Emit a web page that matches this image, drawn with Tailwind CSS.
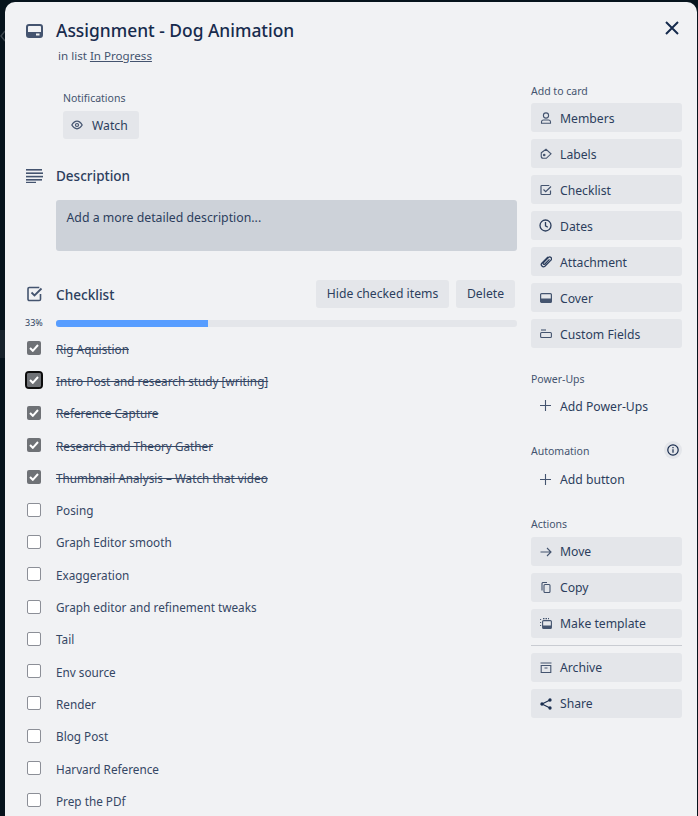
<!DOCTYPE html>
<html><head><meta charset="utf-8"><script src="https://cdn.jsdelivr.net/npm/@tailwindcss/browser@4"></script></head>
<body class="bg-[#06131c] overflow-hidden">
<div class="relative w-[698px] h-[816px] overflow-hidden pt-[2px] pl-[5px] font-['Noto_Sans',sans-serif] text-[#2c3e5d]">
<div class="absolute left-0 top-[330px] w-[5px] h-[28px] bg-[#17222b]"></div>
<svg class="absolute left-0 top-[30px]" width="5" height="12" viewBox="0 0 5 12" fill="none" stroke="#3a444c" stroke-width="1.500"><path d="M5 1 1 6l4 5"/></svg>
<div class="relative w-[692px] h-[900px] bg-[#f1f2f4] rounded-t-[10px] flex">
  <button class="absolute right-[16px] top-[17px] text-[#172b4d]"><svg width="18" height="18" viewBox="0 0 18 18" fill="none" stroke="currentColor" stroke-width="2"><path d="M3 3l12 12M15 3L3 15"/></svg></button>
  <main class="w-[526px] shrink-0">
    <div class="flex pl-[21px] pt-[17px]">
      <svg class="mt-[5px] w-[17px] h-[14px]" viewBox="0 0 17 14"><rect x="1" y="1" width="15" height="12" rx="2" fill="none" stroke="#44546f" stroke-width="2"/><rect x="1" y="8" width="15" height="5" fill="#44546f"/><rect x="10" y="9.5" width="3.5" height="2" fill="#f1f2f4"/></svg>
      <div class="ml-[13px]"><h1 class="text-[17.4px] leading-[24px] font-medium text-[#172b4d] -mt-[1px]">Assignment - Dog Animation</h1>
      <p class="text-[11.6px] leading-[16px] mt-[6px] ml-[2px] text-[#44546f]">in list <span class="underline">In Progress</span></p></div>
    </div>
    <div class="ml-[58px] mt-[27px]">
      <p class="text-[10.5px] leading-[14px] text-[#44546f]">Notifications</p>
      <button class="mt-[6px] h-[28px] w-[76px] bg-[#e4e6ea] rounded-[3px] flex items-center pl-[8px] gap-[9px] text-[12.2px]">
        <svg width="12" height="10" viewBox="0 0 12 10" fill="none" stroke="#44546f" stroke-width="1.2"><path d="M.8 5C2.3 2.5 4 1.2 6 1.2S9.700 2.500 11.200 5C9.700 7.500 8 8.800 6 8.800S2.300 7.500.8 5Z"/><circle cx="6" cy="5" r="1.500"/></svg><span class="pt-[2px]">Watch</span></button>
    </div>
    <div class="flex items-center pl-[21px] mt-[27px] h-[20px]">
      <svg width="17" height="14" viewBox="0 0 17 14" fill="#44546f"><rect x="0" y="0" width="16" height="1.600"/><rect x="0" y="3.400" width="17" height="1.600"/><rect x="0" y="6.800" width="17" height="1.600"/><rect x="0" y="10" width="16" height="1.600"/><rect x="0" y="12.800" width="10" height="1.200"/></svg>
      <h2 class="ml-[13px] text-[13.5px] font-medium">Description</h2>
    </div>
    <div class="ml-[51px] mt-[14px] w-[461px] h-[51px] bg-[#cdd2d9] rounded-[3px] px-[10.500px] pt-[8px] text-[12.3px] leading-[20px]">Add a more detailed description...</div>
    <div class="flex items-center pl-[22px] mt-[29px] h-[28px]">
      <svg width="16" height="16" viewBox="0 0 16 16" fill="none" stroke="#44546f" stroke-width="1.600"><path d="M13.500 8v5.200a1.300 1.300 0 0 1-1.300 1.300H2.300A1.300 1.300 0 0 1 1 13.200V2.800a1.300 1.300 0 0 1 1.300-1.300h10"/><path d="M4.500 6.500l3 3L14.500 2.500" stroke-width="1.800"/></svg>
      <h2 class="ml-[13px] text-[13.6px] font-medium pt-[2px]">Checklist</h2>
      <button class="ml-auto h-[28px] w-[133px] bg-[#e4e6ea] rounded-[3px] text-[12.2px] pt-[1px]">Hide checked items</button>
      <button class="ml-[7px] mr-[16px] h-[28px] w-[59px] bg-[#e4e6ea] rounded-[3px] text-[12.2px] pt-[1px]">Delete</button>
    </div>
    <div class="flex items-center mt-[8px] h-[14px]">
      <span class="w-[51px] pl-[20px] text-[9px]">33%</span>
      <div class="w-[461px] h-[7px] rounded-[3px] bg-[#e4e6ea] overflow-hidden"><div class="w-[152px] h-full bg-[#579dff]"></div></div>
    </div>
    <ul class="mt-[2px] text-[11.75px] leading-[18px] text-[#354764] [&_li>span:last-child]:ml-[15px] [&_li>span:last-child]:pt-[1px]">
      <li class="h-[32.300px] flex items-center pl-[22px]"><span class="w-[14px] h-[14px] rounded-[2px] bg-[#6f7276] flex items-center justify-center"><svg width="10" height="8" viewBox="0 0 10 8" fill="none" stroke="#fff" stroke-width="2"><path d="M1 4l2.800 2.800L9 1"/></svg></span><span class="line-through">Rig Aquistion</span></li>
      <li class="h-[32.300px] flex items-center pl-[22px]"><span class="w-[14px] h-[14px] rounded-[2px] bg-[#6f7276] outline-2 outline-[#0d0d0d] outline-offset-0 flex items-center justify-center"><svg width="10" height="8" viewBox="0 0 10 8" fill="none" stroke="#fff" stroke-width="2"><path d="M1 4l2.800 2.800L9 1"/></svg></span><span class="line-through">Intro Post and research study [writing]</span></li>
      <li class="h-[32.300px] flex items-center pl-[22px]"><span class="w-[14px] h-[14px] rounded-[2px] bg-[#6f7276] flex items-center justify-center"><svg width="10" height="8" viewBox="0 0 10 8" fill="none" stroke="#fff" stroke-width="2"><path d="M1 4l2.800 2.800L9 1"/></svg></span><span class="line-through">Reference Capture</span></li>
      <li class="h-[32.300px] flex items-center pl-[22px]"><span class="w-[14px] h-[14px] rounded-[2px] bg-[#6f7276] flex items-center justify-center"><svg width="10" height="8" viewBox="0 0 10 8" fill="none" stroke="#fff" stroke-width="2"><path d="M1 4l2.800 2.800L9 1"/></svg></span><span class="line-through">Research and Theory Gather</span></li>
      <li class="h-[32.300px] flex items-center pl-[22px]"><span class="w-[14px] h-[14px] rounded-[2px] bg-[#6f7276] flex items-center justify-center"><svg width="10" height="8" viewBox="0 0 10 8" fill="none" stroke="#fff" stroke-width="2"><path d="M1 4l2.800 2.800L9 1"/></svg></span><span class="line-through">Thumbnail Analysis – Watch that video</span></li>
      <li class="h-[32.300px] flex items-center pl-[22px]"><span class="w-[14px] h-[14px] rounded-[2px] bg-white border border-[#8c8f97]"></span><span>Posing</span></li>
      <li class="h-[32.300px] flex items-center pl-[22px]"><span class="w-[14px] h-[14px] rounded-[2px] bg-white border border-[#8c8f97]"></span><span>Graph Editor smooth</span></li>
      <li class="h-[32.300px] flex items-center pl-[22px]"><span class="w-[14px] h-[14px] rounded-[2px] bg-white border border-[#8c8f97]"></span><span>Exaggeration</span></li>
      <li class="h-[32.300px] flex items-center pl-[22px]"><span class="w-[14px] h-[14px] rounded-[2px] bg-white border border-[#8c8f97]"></span><span>Graph editor and refinement tweaks</span></li>
      <li class="h-[32.300px] flex items-center pl-[22px]"><span class="w-[14px] h-[14px] rounded-[2px] bg-white border border-[#8c8f97]"></span><span>Tail</span></li>
      <li class="h-[32.300px] flex items-center pl-[22px]"><span class="w-[14px] h-[14px] rounded-[2px] bg-white border border-[#8c8f97]"></span><span>Env source</span></li>
      <li class="h-[32.300px] flex items-center pl-[22px]"><span class="w-[14px] h-[14px] rounded-[2px] bg-white border border-[#8c8f97]"></span><span>Render</span></li>
      <li class="h-[32.300px] flex items-center pl-[22px]"><span class="w-[14px] h-[14px] rounded-[2px] bg-white border border-[#8c8f97]"></span><span>Blog Post</span></li>
      <li class="h-[32.300px] flex items-center pl-[22px]"><span class="w-[14px] h-[14px] rounded-[2px] bg-white border border-[#8c8f97]"></span><span>Harvard Reference</span></li>
      <li class="h-[32.300px] flex items-center pl-[22px]"><span class="w-[14px] h-[14px] rounded-[2px] bg-white border border-[#8c8f97]"></span><span>Prep the PDf</span></li>
    </ul>
  </main>
  <aside class="w-[151px] pt-[82px] text-[12.2px]">
    <p class="text-[10.500px] leading-[14px] text-[#44546f] mb-[5px]">Add to card</p>
    <div class="flex flex-col gap-[7px] [&_button]:pt-[3px] [&_button>span]:-mt-[3px]">
      <button class="h-[29px] bg-[#e4e6ea] rounded-[3px] flex items-center"><span class="w-[29px] flex justify-center"><svg width="12" height="12" viewBox="0 0 12 12" fill="none" stroke="#44546f" stroke-width="1.100"><circle cx="6" cy="3.500" r="2.600"/><path d="M1.500 11.200V9.800A2 2 0 0 1 3.500 8h5a2 2 0 0 1 2 1.800v1.400Z"/></svg></span>Members</button>
      <button class="h-[29px] bg-[#e4e6ea] rounded-[3px] flex items-center"><span class="w-[29px] flex justify-center"><svg width="12" height="12" viewBox="0 0 12 12" fill="none" stroke="#44546f" stroke-width="1.100"><path d="M1.300 4.800 6 1.300 11 5.800 6.300 10.300H3.200A2 2 0 0 1 1.200 8.300Z"/><circle cx="4.200" cy="7" r="1.300" fill="#44546f" stroke="none"/></svg></span>Labels</button>
      <button class="h-[29px] bg-[#e4e6ea] rounded-[3px] flex items-center"><span class="w-[29px] flex justify-center"><svg width="12" height="12" viewBox="0 0 12 12" fill="none" stroke="#44546f" stroke-width="1.200"><path d="M10.500 6.500v3.200a.8.8 0 0 1-.8.8H1.800a.8.8 0 0 1-.8-.8V2.300a.8.8 0 0 1 .8-.8h7.500"/><path d="M3.500 5.500l2.200 2.200L11 2.500"/></svg></span>Checklist</button>
      <button class="h-[29px] bg-[#e4e6ea] rounded-[3px] flex items-center"><span class="w-[29px] flex justify-center"><svg width="13" height="13" viewBox="0 0 13 13" fill="none" stroke="#2c3e5d" stroke-width="1.300"><circle cx="6.500" cy="6.500" r="5.500"/><path d="M6.500 3v3.800l2.300 1.400"/></svg></span>Dates</button>
      <button class="h-[29px] bg-[#e4e6ea] rounded-[3px] flex items-center"><span class="w-[29px] flex justify-center"><svg width="12" height="12" viewBox="0 0 12 12" fill="none" stroke="#2c3e5d" stroke-width="1.300"><path d="M8 .9 1.800 7.100a2.200 2.200 0 0 0 3.100 3.100L11 4.100a1.800 1.800 0 0 0-2.600-2.600L3.300 6.800a1 1 0 0 0 1.400 1.400L9.500 3.400"/></svg></span>Attachment</button>
      <button class="h-[29px] bg-[#e4e6ea] rounded-[3px] flex items-center"><span class="w-[29px] flex justify-center"><svg width="12" height="10" viewBox="0 0 12 10"><rect x=".6" y=".6" width="10.800" height="8.800" rx="1" fill="none" stroke="#44546f" stroke-width="1.200"/><rect x="1" y="5.500" width="10" height="4" fill="#44546f"/></svg></span>Cover</button>
      <button class="h-[29px] bg-[#e4e6ea] rounded-[3px] flex items-center"><span class="w-[29px] flex justify-center"><svg width="12" height="10" viewBox="0 0 12 10" fill="none" stroke="#44546f" stroke-width="1.100"><path d="M1 1h5"/><rect x=".6" y="3.500" width="10.800" height="5" rx="1"/></svg></span>Custom Fields</button>
    </div>
    <p class="text-[10.500px] leading-[14px] text-[#44546f] mt-[24px]">Power-Ups</p>
    <button class="h-[29px] mt-[5px] pt-[3px] flex items-center"><span class="w-[29px] -mt-[3px] flex justify-center"><svg width="11" height="11" viewBox="0 0 11 11" stroke="#44546f" stroke-width="1.100"><path d="M5.500 0v11M0 5.500h11"/></svg></span>Add Power-Ups</button>
    <div class="flex items-center justify-between mt-[23px] h-[16px]"><p class="text-[10.500px] leading-[14px] text-[#44546f]">Automation</p><span class="w-[18px] h-[18px] rounded-full bg-[#e4e6ea] flex items-center justify-center -mt-[3px]"><svg width="12" height="12" viewBox="0 0 12 12" fill="none" stroke="#172b4d" stroke-width="1.200"><circle cx="6" cy="6" r="5.200"/><path d="M6 5.200v3.500M6 3v1.200"/></svg></span></div>
    <button class="h-[29px] mt-[6px] pt-[1px] flex items-center"><span class="w-[29px] -mt-[1px] flex justify-center"><svg width="11" height="11" viewBox="0 0 11 11" stroke="#44546f" stroke-width="1.100"><path d="M5.500 0v11M0 5.500h11"/></svg></span>Add button</button>
    <p class="text-[10.500px] leading-[14px] text-[#44546f] mt-[23px] mb-[6px]">Actions</p>
    <div class="flex flex-col gap-[7px] [&_button]:pt-[1px] [&_button>span]:-mt-[1px]">
      <button class="h-[29px] bg-[#e4e6ea] rounded-[3px] flex items-center"><span class="w-[29px] flex justify-center"><svg width="12" height="10" viewBox="0 0 12 10" fill="none" stroke="#44546f" stroke-width="1.100"><path d="M.5 5h10.500M7 1l4 4-4 4"/></svg></span>Move</button>
      <button class="h-[29px] bg-[#e4e6ea] rounded-[3px] flex items-center"><span class="w-[29px] flex justify-center"><svg width="10" height="11" viewBox="0 0 10 11" fill="none" stroke="#44546f" stroke-width="1.100"><path d="M1 8.500V1.500a1 1 0 0 1 1-1h4"/><rect x="3" y="2.500" width="6" height="8" rx="1"/></svg></span>Copy</button>
      <button class="h-[29px] bg-[#e4e6ea] rounded-[3px] flex items-center"><span class="w-[29px] flex justify-center"><svg width="12" height="11" viewBox="0 0 12 11" fill="none" stroke="#44546f" stroke-width="1.100"><path d="M.6 1v1M.6 4v1M.6 7v1M3 .6h6" stroke-dasharray="1.500 1"/><rect x="2.600" y="2.600" width="8.800" height="7.800" rx="1"/><rect x="3" y="7.500" width="8" height="2.500" fill="#44546f" stroke="none"/></svg></span>Make template</button>
      <div class="h-px bg-[#c9ccd2]"></div>
      <button class="h-[29px] bg-[#e4e6ea] rounded-[3px] flex items-center"><span class="w-[29px] flex justify-center"><svg width="12" height="11" viewBox="0 0 12 11" fill="none" stroke="#44546f" stroke-width="1.100"><path d="M.5 1h11M1.200 3.500h9.600v7H1.200ZM4.500 6h3"/></svg></span>Archive</button>
      <button class="h-[29px] bg-[#e4e6ea] rounded-[3px] flex items-center"><span class="w-[29px] flex justify-center"><svg width="12" height="12" viewBox="0 0 12 12" fill="#172b4d" stroke="#172b4d" stroke-width="1.100"><path d="M10 2 2 6l8 4" fill="none"/><circle cx="2" cy="6" r="1.100"/><circle cx="10" cy="2" r="1.100"/><circle cx="10" cy="10" r="1.100"/></svg></span>Share</button>
    </div>
  </aside>
</div>
</div>
</body></html>
